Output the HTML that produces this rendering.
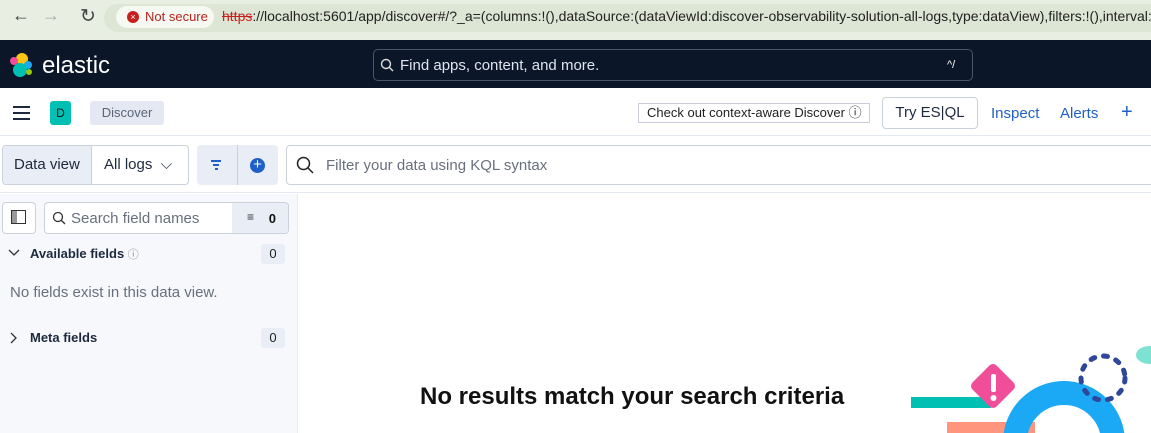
<!DOCTYPE html><html><head><style>
*{box-sizing:border-box;margin:0;padding:0}
html,body{width:1151px;height:433px;overflow:hidden}
body{font-family:"Liberation Sans",sans-serif;background:#fff;position:relative}
.a{position:absolute}
</style></head><body>
<div class="a" style="left:0;top:0;width:1151px;height:40px;background:#e8eee2;overflow:hidden">
<div class="a" style="left:104px;top:4px;width:1060px;height:28px;border-radius:14px;background:#dde5d5"></div>
<div class="a" style="left:222px;top:8px;font-size:14px;color:#222;white-space:nowrap"><span style="color:#c5221f;text-decoration:line-through">https</span>://localhost:5601/app/discover#/?_a=(columns:!(),dataSource:(dataViewId:discover-observability-solution-all-logs,type:dataView),filters:!(),interval:a</div>
</div>
<div class="a" style="left:12px;top:5px;font-size:18px;color:#444">&#8592;</div>
<div class="a" style="left:42px;top:5px;font-size:18px;color:#aaa">&#8594;</div>
<div class="a" style="left:80px;top:5px;font-size:19px;color:#444">&#8635;</div>
<div class="a" style="left:116px;top:6px;width:98px;height:22px;border-radius:11px;background:#f6f8f2"></div>
<div class="a" style="left:127px;top:11px;width:12px;height:12px;border-radius:50%;background:#c5221f;color:#fff;font-size:9px;text-align:center;line-height:12px">×</div>
<div class="a" style="left:145px;top:9px;font-size:13px;color:#b3261e">Not secure</div>
<div class="a" style="left:0;top:40px;width:1151px;height:48px;background:#0b1628"></div>
<svg class="a" style="left:9px;top:52px" width="24" height="26"><circle cx="13" cy="7" r="6" fill="#fec514"/><circle cx="5" cy="9" r="4" fill="#f04e98"/><circle cx="19" cy="13" r="4" fill="#1ba9f5"/><circle cx="11" cy="18" r="7" fill="#00bfb3"/><circle cx="20" cy="20" r="3" fill="#93c90e"/></svg>
<div class="a" style="left:42px;top:52px;font-size:24px;color:#fff">elastic</div>
<div class="a" style="left:373px;top:49px;width:600px;height:32px;border:1px solid #4a5568;border-radius:5px"></div>
<svg class="a" style="left:380px;top:58px" width="14" height="14"><circle cx="6" cy="6" r="4.5" fill="none" stroke="#ddd" stroke-width="1.4"/><path d="M9 9l4 4" stroke="#ddd" stroke-width="1.4"/></svg>
<div class="a" style="left:400px;top:57px;font-size:15px;color:#dfe5ef">Find apps, content, and more.</div>
<div class="a" style="left:947px;top:59px;font-size:11px;color:#fff">^/</div>
<div class="a" style="left:0;top:88px;width:1151px;height:48px;border-bottom:1px solid #e3e8f2"></div>
<div class="a" style="left:13px;top:106px;width:17px;height:2px;background:#1d2a3e;box-shadow:0 6px 0 #1d2a3e,0 12px 0 #1d2a3e"></div>
<div class="a" style="left:50px;top:101px;width:21px;height:24px;background:#00bfb3;border-radius:3px;font-size:12px;text-align:center;line-height:24px;color:#111">D</div>
<div class="a" style="left:90px;top:101px;width:74px;height:24px;background:#e3e8f2;border-radius:3px;font-size:13px;text-align:center;line-height:24px;color:#5a6478">Discover</div>
<div class="a" style="left:638px;top:103px;width:232px;height:20px;border:1px solid #ccd;font-size:13px;line-height:18px;padding-left:8px;color:#222">Check out context-aware Discover ⓘ</div>
<div class="a" style="left:882px;top:97px;width:96px;height:32px;border:1px solid #cad1dc;border-radius:4px;font-size:15px;line-height:30px;text-align:center;color:#1d2a3e">Try ES|QL</div>
<div class="a" style="left:991px;top:105px;font-size:15px;color:#1f5fc8">Inspect</div>
<div class="a" style="left:1060px;top:105px;font-size:15px;color:#1f5fc8">Alerts</div>
<div class="a" style="left:1121px;top:101px;font-size:20px;color:#1f5fc8">+</div>
<div class="a" style="left:0;top:136px;width:1151px;height:57px;border-bottom:1px solid #e3e8f2"></div>
<div class="a" style="left:2px;top:145px;width:187px;height:40px;border:1px solid #cad1dc;border-radius:4px;overflow:hidden"><div style="position:absolute;left:0;top:0;width:89px;height:38px;background:#e9edf5;border-right:1px solid #cad1dc;font-size:15px;line-height:38px;padding-left:11px;color:#1d2a3e">Data view</div><div style="position:absolute;left:101px;top:0;font-size:15px;line-height:38px;color:#1d2a3e">All logs &nbsp;⌵</div></div>
<div class="a" style="left:197px;top:145px;width:81px;height:40px;background:#e9edf5;border-radius:4px"></div>
<div class="a" style="left:237px;top:145px;width:1px;height:40px;background:#cad1dc"></div>
<div class="a" style="left:211px;top:160px;width:10px;height:1.5px;background:#1f5fc8"></div>
<div class="a" style="left:213px;top:164px;width:6px;height:1.5px;background:#1f5fc8"></div>
<div class="a" style="left:215px;top:168px;width:3px;height:1.5px;background:#1f5fc8"></div>
<div class="a" style="left:250px;top:158px;width:15px;height:15px;border-radius:50%;background:#1f5fc8;color:#fff;font-size:15px;line-height:14px;text-align:center">+</div>
<div class="a" style="left:286px;top:145px;width:880px;height:40px;border:1px solid #cad1dc;border-radius:4px"></div>
<svg class="a" style="left:296px;top:156px" width="18" height="18"><circle cx="7.5" cy="7.5" r="6" fill="none" stroke="#222" stroke-width="1.5"/><path d="M12 12l5 5" stroke="#222" stroke-width="1.5"/></svg>
<div class="a" style="left:326px;top:157px;font-size:15px;color:#69707d">Filter your data using KQL syntax</div>
<div class="a" style="left:0;top:194px;width:298px;height:239px;background:#f7f8fc;border-right:1px solid #e3e8f2"></div>
<div class="a" style="left:2px;top:202px;width:34px;height:32px;border:1px solid #cad1dc;border-radius:4px;background:#fff"></div>
<div class="a" style="left:11px;top:210px;width:15px;height:14px;border:1.5px solid #333;background:linear-gradient(90deg,#999 0 5px,#fff 5px)"></div>
<div class="a" style="left:44px;top:202px;width:245px;height:32px;border:1px solid #cad1dc;border-radius:4px;background:#fff;overflow:hidden"><div style="position:absolute;right:0;top:0;width:56px;height:30px;background:#e9edf5"></div><div style="position:absolute;right:12px;top:8px;font-size:13px;color:#111;font-weight:bold">0</div><div style="position:absolute;right:34px;top:7px;font-size:12px;color:#333">≡</div></div>
<svg class="a" style="left:52px;top:211px" width="14" height="14"><circle cx="6" cy="6" r="4.5" fill="none" stroke="#333" stroke-width="1.3"/><path d="M9 9l4 4" stroke="#333" stroke-width="1.3"/></svg>
<div class="a" style="left:71px;top:210px;font-size:15px;color:#69707d">Search field names</div>
<svg class="a" style="left:8px;top:249px" width="12" height="8"><path d="M1 1l5 5 5-5" fill="none" stroke="#333" stroke-width="1.3"/></svg>
<div class="a" style="left:30px;top:246px;font-size:13px;font-weight:bold;color:#1d2a3e">Available fields <span style="font-weight:normal;color:#888;font-size:11px">ⓘ</span></div>
<div class="a" style="left:261px;top:244px;width:24px;height:20px;background:#e9edf5;border-radius:3px;font-size:13px;text-align:center;line-height:20px;color:#222">0</div>
<div class="a" style="left:10px;top:284px;font-size:15px;color:#69707d">No fields exist in this data view.</div>
<svg class="a" style="left:10px;top:332px" width="8" height="12"><path d="M1 1l5 5-5 5" fill="none" stroke="#333" stroke-width="1.3"/></svg>
<div class="a" style="left:30px;top:330px;font-size:13px;font-weight:bold;color:#1d2a3e">Meta fields</div>
<div class="a" style="left:261px;top:328px;width:24px;height:20px;background:#e9edf5;border-radius:3px;font-size:13px;text-align:center;line-height:20px;color:#222">0</div>
<div class="a" style="left:420px;top:383px;font-size:24px;font-weight:bold;color:#111">No results match your search criteria</div>
<svg class="a" style="left:850px;top:320px" width="301" height="113">
<rect x="61" y="77" width="80" height="11" fill="#00bfb3"/>
<rect x="97" y="102" width="88" height="11" fill="#ff957d"/>
<circle cx="214" cy="122" r="49" fill="none" stroke="#1ba9f5" stroke-width="24"/>
<rect x="126" y="49" width="34" height="34" rx="5" transform="rotate(45 143 66)" fill="#f04e98"/>
<rect x="141" y="54" width="5" height="18" rx="2" fill="#fff"/><circle cx="143.5" cy="78" r="3" fill="#fff"/>
<circle cx="253" cy="58" r="22" fill="none" stroke="#2e4799" stroke-width="5" stroke-linecap="round" stroke-dasharray="4 9"/>
<ellipse cx="300" cy="35" rx="14" ry="9" fill="#7de2d1"/>
</svg>
</body></html>
